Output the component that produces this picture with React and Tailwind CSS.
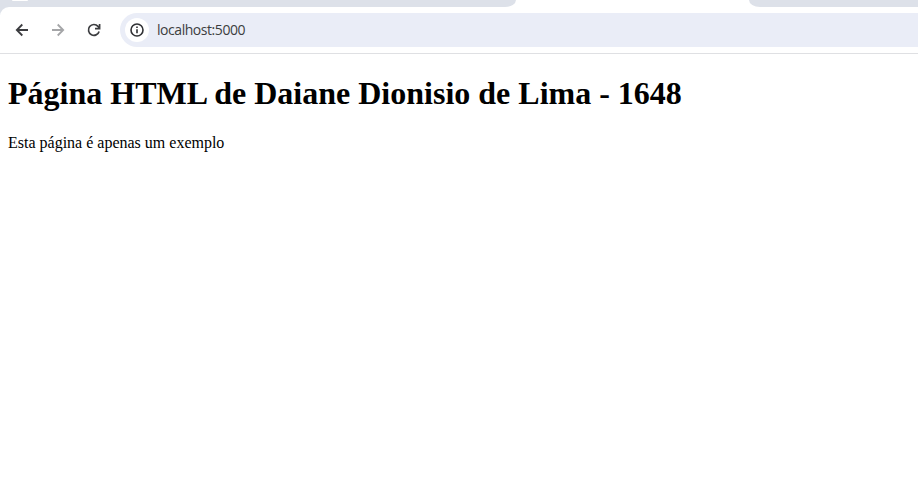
function TabStrip() {
  return (
    <div className="flex h-[15px] items-start">
      <div className="flex h-[7px] w-[516px] justify-start rounded-br-[11px_7px] bg-[#dde1e9] pl-3">
        <div className="h-px w-4 rounded-b-full bg-white" />
      </div>
      <div className="h-[7px] w-[233px] bg-white" />
      <div className="h-[7px] flex-1 rounded-bl-[11px_7px] bg-[#dde1e9]" />
    </div>
  );
}

function Toolbar() {
  return (
    <div className="-mt-2 flex h-[47px] items-center rounded-tl-[9px] border-b border-[#dfe0e3] bg-white pl-3">
      <svg className="h-5 w-5 text-[#3c3d40]" viewBox="0 0 20 20" fill="none" stroke="currentColor" strokeWidth="1.8">
        <path d="M16 10H5.2M10.3 4.5L4.8 10l5.5 5.5" />
      </svg>
      <svg className="ml-4 h-5 w-5 text-[#a5a6a8]" viewBox="0 0 20 20" fill="none" stroke="currentColor" strokeWidth="1.8">
        <path d="M4 10h10.8M9.7 4.5l5.5 5.5-5.5 5.5" />
      </svg>
      <svg className="ml-4 h-5 w-5 text-[#3c3d40]" viewBox="0 0 20 20" fill="none" stroke="currentColor" strokeWidth="1.7">
        <path d="M15.1 11.4A5.4 5.4 0 1 1 14 6.4L15.5 8M15.6 4v4.6H11" />
      </svg>
      <div className="ml-4 flex h-[34px] flex-1 items-center rounded-l-full bg-[#eaedf7] pl-[5px]">
        <div className="flex h-6 w-6 items-center justify-center rounded-full bg-white">
          <svg className="h-4 w-4 text-[#303134]" viewBox="0 0 16 16" fill="none" stroke="currentColor" strokeWidth="1.6">
            <circle cx="8" cy="8" r="6" />
            <path d="M8 7.2v4M8 4.6v1.5" />
          </svg>
        </div>
        <span className="ml-2 font-['Open_Sans',sans-serif] text-[14px] leading-5 tracking-[-0.45px] text-[#3c3d40]">
          localhost:5000
        </span>
      </div>
    </div>
  );
}

export default function App() {
  return (
    <div className="h-[504px] w-[918px] overflow-hidden bg-white">
      <div className="bg-[linear-gradient(to_right,#dde1e9_20px,white_20px)] bg-[length:100%_15px] bg-no-repeat">
        <TabStrip />
        <Toolbar />
      </div>
      <main className="px-2 pt-[21px] font-['Liberation_Serif','Times_New_Roman',serif] text-black">
        <h1 className="text-[32px] leading-[37px] font-bold whitespace-nowrap">
          Página HTML de Daiane Dionisio de Lima - 1648
        </h1>
        <p className="mt-[22px] text-base leading-[18px]">Esta página é apenas um exemplo</p>
      </main>
    </div>
  );
}
